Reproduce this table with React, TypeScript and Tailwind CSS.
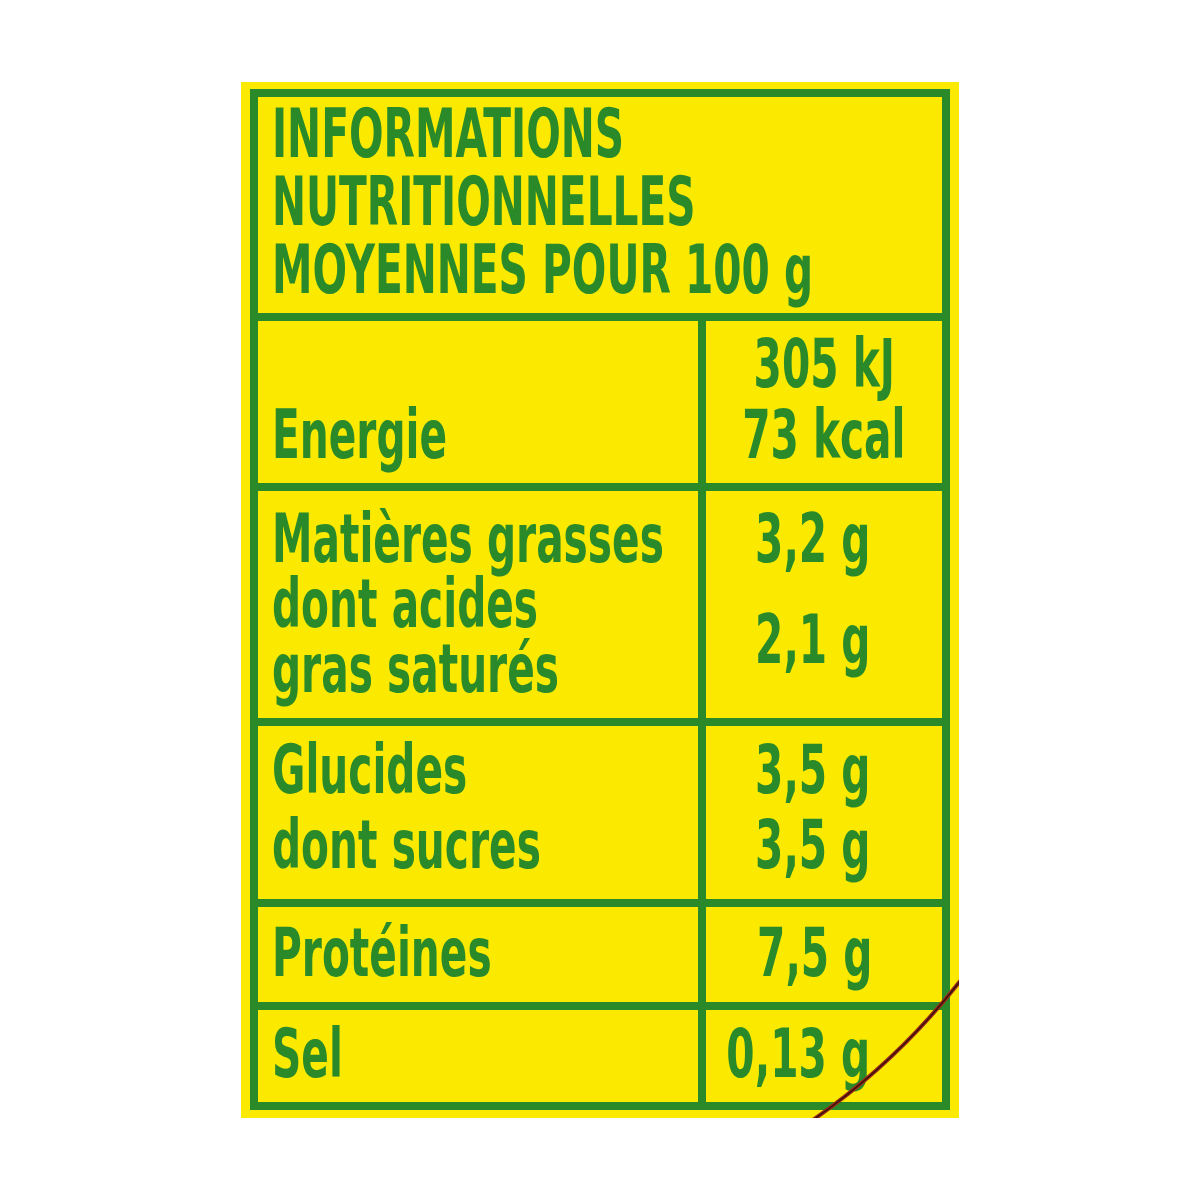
import React from 'react';

type Align = 'left' | 'center' | 'right';

function Line({ children, align = 'left', className = '' }: { children: React.ReactNode; align?: Align; className?: string }) {
  const j = align === 'left' ? 'justify-start' : align === 'center' ? 'justify-center' : 'justify-end';
  const o = align === 'left' ? 'origin-left' : align === 'center' ? 'origin-center' : 'origin-right';
  return (
    <div className={`flex ${j} ${className}`}>
      <span className={`shrink-0 whitespace-nowrap ${o} scale-x-[0.665]`}>{children}</span>
    </div>
  );
}

export default function App() {
  return (
    <div className="w-[1200px] h-[1200px] bg-white pt-[82px] pl-[241px]">
      <div className="relative w-[718px] h-[1036px] bg-[#fbea00] pt-[7px] pl-[9px] overflow-hidden font-['DejaVu_Sans_Condensed','DejaVu_Sans',sans-serif] font-bold font-stretch-condensed text-[68px] text-[#2a8a2a]">
        <div className="w-[700px] h-[1021px] border-8 border-[#2a8a2a] flex flex-col">
          {/* Header */}
          <div className="h-[216px] shrink-0 pl-[14px] pt-[3px] leading-[68px]">
            <Line>INFORMATIONS</Line>
            <Line>NUTRITIONNELLES</Line>
            <Line>MOYENNES POUR 100 g</Line>
          </div>

          {/* Energie */}
          <div className="grid grid-cols-[440px_244px] h-[170px] shrink-0 border-t-8 border-[#2a8a2a] leading-[71px]">
            <div className="pl-[14px] pt-[78px]">
              <Line>Energie</Line>
            </div>
            <div className="border-l-8 border-[#2a8a2a] pt-[7px]">
              <Line align="center">305 kJ</Line>
              <Line align="center">73 kcal</Line>
            </div>
          </div>

          {/* Matières grasses */}
          <div className="grid grid-cols-[440px_244px] h-[235px] shrink-0 border-t-8 border-[#2a8a2a] leading-[65px]">
            <div className="pl-[14px] pt-[15px]">
              <Line>Matières grasses</Line>
              <Line>dont acides</Line>
              <Line>gras saturés</Line>
            </div>
            <div className="border-l-8 border-[#2a8a2a] pt-[15px] pr-[72px]">
              <Line align="right">3,2 g</Line>
              <Line align="right" className="mt-[36px]">2,1 g</Line>
            </div>
          </div>

          {/* Glucides */}
          <div className="grid grid-cols-[440px_244px] h-[181px] shrink-0 border-t-8 border-[#2a8a2a] leading-[75px]">
            <div className="pl-[14px] pt-[6px]">
              <Line>Glucides</Line>
              <Line>dont sucres</Line>
            </div>
            <div className="border-l-8 border-[#2a8a2a] pt-[6px] pr-[72px]">
              <Line align="right">3,5 g</Line>
              <Line align="right">3,5 g</Line>
            </div>
          </div>

          {/* Protéines */}
          <div className="grid grid-cols-[440px_244px] h-[103px] shrink-0 border-t-8 border-[#2a8a2a] leading-[68px]">
            <div className="pl-[14px] pt-[12px]">
              <Line>Protéines</Line>
            </div>
            <div className="border-l-8 border-[#2a8a2a] pt-[12px] pr-[70px]">
              <Line align="right">7,5 g</Line>
            </div>
          </div>

          {/* Sel */}
          <div className="grid grid-cols-[440px_244px] h-[100px] shrink-0 border-t-8 border-[#2a8a2a] leading-[68px]">
            <div className="pl-[14px] pt-[10px]">
              <Line>Sel</Line>
            </div>
            <div className="border-l-8 border-[#2a8a2a] pt-[10px] pr-[72px]">
              <Line align="right">0,13 g</Line>
            </div>
          </div>
        </div>

        <svg className="absolute inset-0 pointer-events-none" width="718" height="1036" viewBox="0 0 718 1036">
          <path d="M 732 882 Q 660 980 560 1046" fill="none" stroke="#9a2a1a" strokeWidth="4" />
          <path d="M 732 882 Q 660 980 560 1046" fill="none" stroke="#3a1208" strokeWidth="1.5" />
        </svg>
      </div>
    </div>
  );
}
